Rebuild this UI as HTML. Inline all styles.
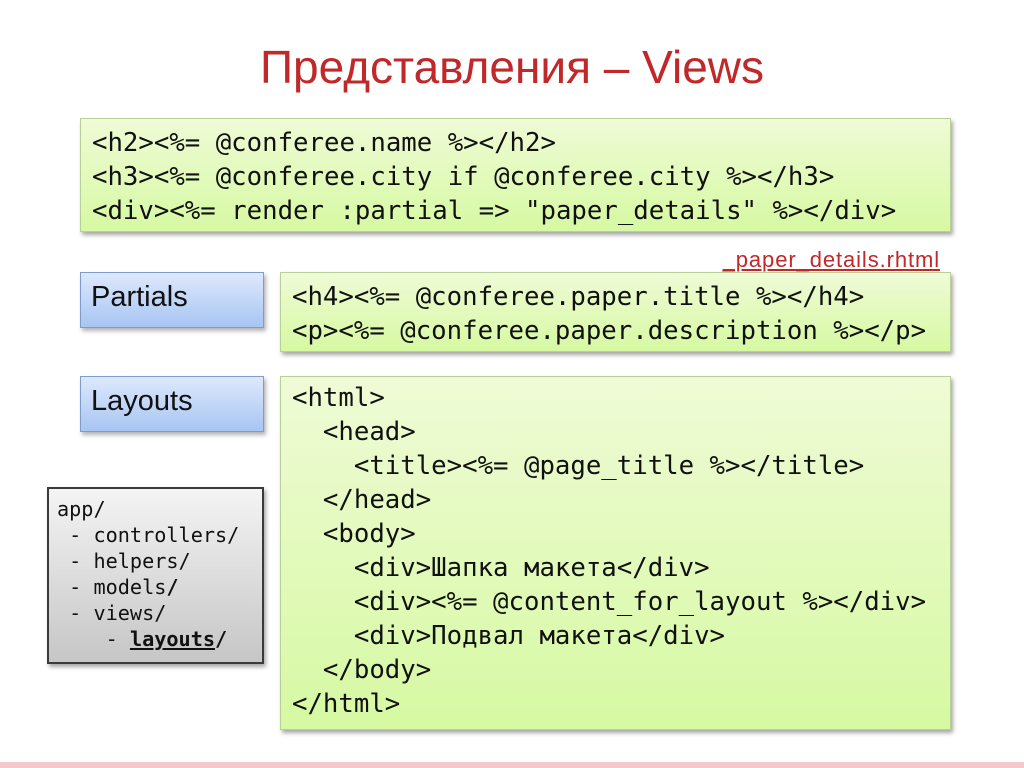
<!DOCTYPE html>
<html><head><meta charset="utf-8"><style>
*{margin:0;padding:0;box-sizing:border-box}
body{width:1024px;height:768px;background:#fff;position:relative;overflow:hidden;font-family:"Liberation Sans",sans-serif}
.t{position:absolute;left:0;width:1024px;top:40px;text-align:center;font-size:46px;color:#c0282a}
.g{position:absolute;background:linear-gradient(#effbd6,#d6f9a2);border:1px solid #b8cf98;box-shadow:2px 3px 4px rgba(0,0,0,.35)}
.code{font-family:"DejaVu Sans Mono","Liberation Mono",monospace;font-size:25.7px;line-height:34px;color:#111;white-space:pre}
.b{position:absolute;background:linear-gradient(#dde9fc,#a8c5f3);border:1px solid #7d9ccb;box-shadow:2px 3px 4px rgba(0,0,0,.3);font-size:29px;color:#111;padding:8px 10px}
.a{position:absolute;left:47px;top:487px;width:217px;height:177px;background:linear-gradient(#f4f4f4,#c6c6c6);border:2px solid #3a3a3a;box-shadow:2px 3px 4px rgba(0,0,0,.35);font-family:"DejaVu Sans Mono",monospace;font-size:20.2px;line-height:26px;white-space:pre;padding:7px 0 0 8px;color:#111}
.lbl{position:absolute;right:84px;top:247px;font-size:22px;letter-spacing:0.9px;color:#c0282a;text-decoration:underline}
.pk{position:absolute;left:0;top:762px;width:1024px;height:6px;background:#f2c8cc}
</style></head><body>
<div class="t">Представления – Views</div>
<div class="g code" style="left:80px;top:118px;width:871px;height:114px;padding:7px 0 0 11px">&lt;h2&gt;&lt;%= @conferee.name %&gt;&lt;/h2&gt;
&lt;h3&gt;&lt;%= @conferee.city if @conferee.city %&gt;&lt;/h3&gt;
&lt;div&gt;&lt;%= render :partial =&gt; "paper_details" %&gt;&lt;/div&gt;</div>
<div class="lbl">_paper_details.rhtml</div>
<div class="b" style="left:80px;top:272px;width:184px;height:56px">Partials</div>
<div class="g code" style="left:280px;top:272px;width:671px;height:80px;padding:7px 0 0 11px">&lt;h4&gt;&lt;%= @conferee.paper.title %&gt;&lt;/h4&gt;
&lt;p&gt;&lt;%= @conferee.paper.description %&gt;&lt;/p&gt;</div>
<div class="b" style="left:80px;top:376px;width:184px;height:56px">Layouts</div>
<div class="g code" style="left:280px;top:376px;width:671px;height:354px;padding:4px 0 0 11px">&lt;html&gt;
  &lt;head&gt;
    &lt;title&gt;&lt;%= @page_title %&gt;&lt;/title&gt;
  &lt;/head&gt;
  &lt;body&gt;
    &lt;div&gt;Шапка макета&lt;/div&gt;
    &lt;div&gt;&lt;%= @content_for_layout %&gt;&lt;/div&gt;
    &lt;div&gt;Подвал макета&lt;/div&gt;
  &lt;/body&gt;
&lt;/html&gt;</div>
<div class="a">app/
 - controllers/
 - helpers/
 - models<b>/</b>
 - views/
    - <b><u>layouts</u>/</b></div>
<div class="pk"></div>
</body></html>
